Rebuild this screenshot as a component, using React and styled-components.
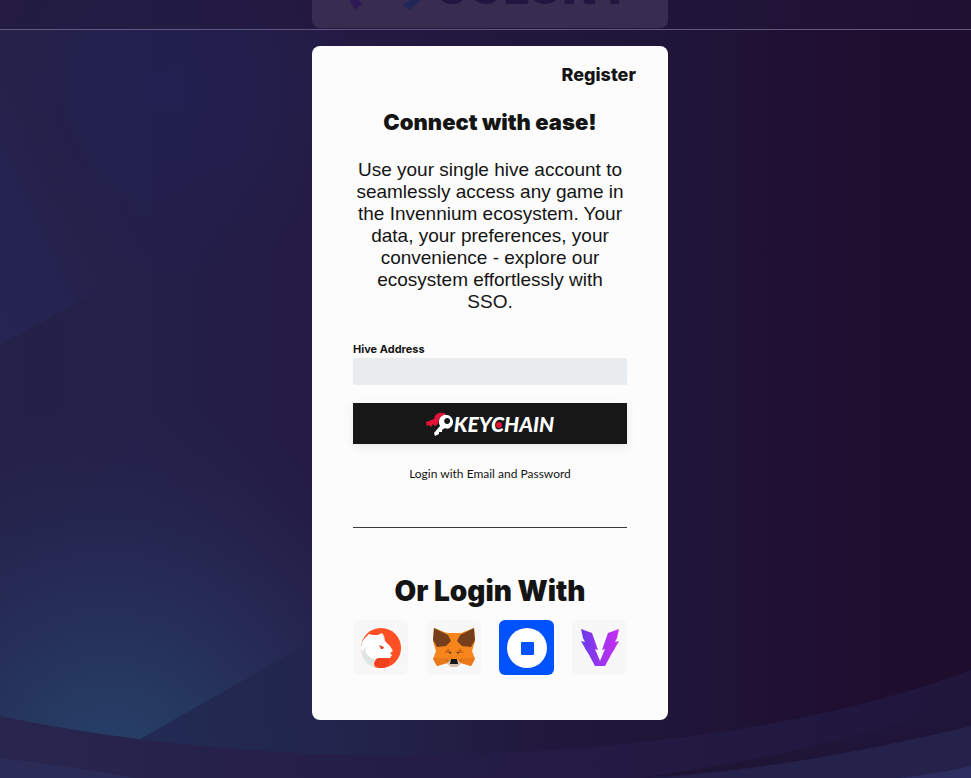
import React from 'react'
import styled, { createGlobalStyle } from 'styled-components'

const GlobalStyle = createGlobalStyle`
  * {
    box-sizing: border-box;
  }
  body {
    margin: 0;
    background: #221a42;
    color: #141414;
    font-family: 'Inter', 'Liberation Sans', sans-serif;
  }
`

const Backdrop = () => (
  <BackdropArt viewBox="0 0 971 778" preserveAspectRatio="none" aria-hidden="true">
    <defs>
      <linearGradient id="night" x1="0" x2="1" y1="0" y2="0">
        <stop offset="0" stopColor="#242148" />
        <stop offset="0.15" stopColor="#23204a" />
        <stop offset="0.32" stopColor="#241b44" />
        <stop offset="0.7" stopColor="#1f1538" />
        <stop offset="0.8" stopColor="#1f1134" />
        <stop offset="0.87" stopColor="#200e31" />
        <stop offset="1" stopColor="#1f0d2d" />
      </linearGradient>
      <linearGradient id="facet" gradientUnits="userSpaceOnUse" x1="0" x2="130" y1="300" y2="240">
        <stop offset="0" stopColor="#262453" />
        <stop offset="0.4" stopColor="#252350" />
        <stop offset="1" stopColor="#242148" stopOpacity="0" />
      </linearGradient>
      <radialGradient id="topGlow" gradientUnits="userSpaceOnUse" cx="170" cy="90" r="190">
        <stop offset="0" stopColor="#222050" />
        <stop offset="1" stopColor="#222050" stopOpacity="0" />
      </radialGradient>
      <radialGradient id="glow" gradientUnits="userSpaceOnUse" cx="110" cy="770" r="370">
        <stop offset="0" stopColor="#26426a" />
        <stop offset="0.25" stopColor="#26385f" />
        <stop offset="0.6" stopColor="#262b56" stopOpacity="0.75" />
        <stop offset="1" stopColor="#25234b" stopOpacity="0" />
      </radialGradient>
      <linearGradient id="lowSlope" gradientUnits="userSpaceOnUse" x1="140" x2="620" y1="750" y2="700">
        <stop offset="0" stopColor="#222b54" />
        <stop offset="0.4" stopColor="#22254d" />
        <stop offset="1" stopColor="#20173a" stopOpacity="0" />
      </linearGradient>
      <linearGradient id="rim" x1="0" x2="1" y1="0" y2="0">
        <stop offset="0" stopColor="#28264f" />
        <stop offset="0.35" stopColor="#251e48" />
        <stop offset="1" stopColor="#20163c" />
      </linearGradient>
      <linearGradient id="rimShade" x1="0" x2="0" y1="0" y2="1">
        <stop offset="0" stopColor="#1d1230" stopOpacity="0" />
        <stop offset="1" stopColor="#1d1230" stopOpacity="0.8" />
      </linearGradient>
    </defs>
    <rect width="971" height="778" fill="url(#night)" />
    <rect width="370" height="300" fill="url(#topGlow)" />
    <path d="M0 29H160V257L0 345Z" fill="url(#facet)" />
    <rect width="490" height="378" y="400" fill="url(#glow)" />
    <path d="M140 739L312 641L620 465V778H140Z" fill="url(#lowSlope)" />
    <path d="M0 716C160 749 300 755 400 755C620 755 830 724 971 670V778H0Z" fill="url(#rim)" />
    <path d="M640 778C770 769 870 750 971 726V700C870 735 770 760 640 778Z" fill="url(#rimShade)" />
    <path d="M660 778C770 769 870 750 971 726V778Z" fill="#24224a" />
    <path d="M0 758C60 765 100 772 138 778H0Z" fill="#2a2b57" />
    <path d="M900 778C925 775 950 771 971 766V778Z" fill="#2b2e5f" />
  </BackdropArt>
)

const KeyIcon = () => (
  <svg width="28" height="24" viewBox="0 0 28 24" aria-hidden="true">
    <path
      d="M20 2C17 0 11 0 9 4L8 7L0 10L1 14L3 13L5 15L7 12L9 14L12 12L13 7L16 4Z"
      fill="#e31337"
    />
    <path
      fillRule="evenodd"
      d="M16 4C20 1 27 4 27 10C27 15 22 18 19 16L16 18L16 20L13 20L13 22L9 24L8 21L14 14C12 10 13 6 16 4ZM21 6A3 3 0 1 0 24 10A3 3 0 0 0 21 6Z"
      fill="#ffffff"
    />
  </svg>
)

const BearIcon = () => (
  <svg width="40" height="40" viewBox="0 0 40 40" aria-hidden="true">
    <circle cx="20" cy="20" r="20" fill="#ff4f24" />
    <path
      d="M6 8L8 6L12 7L17 7L21 5L23 8L24 13L29 18L32 23L29 25L31 27L29 30L17 30C13 32 12 36 14 39C6 37 0 29 0 20C0 15 2 11 6 8Z"
      fill="#ffffff"
    />
    <path d="M5 18C3 24 7 30 14 31C12 34 12 37 14 39C6 37 1 31 1 24Z" fill="#dfe4e5" />
    <path d="M16 31C20 29 22 31 28 31L28 36C25 39 23 40 20 40C14 40 12 35 16 31Z" fill="#f0401f" />
    <path d="M18 17L23 19L22 21H20Z" fill="#ef3e22" />
  </svg>
)

const FoxIcon = () => (
  <svg width="42" height="40" viewBox="0 0 42 40" aria-hidden="true">
    <path d="M1 0L14 5H28L41 0L42 13L39 23L42 31L38 38L28 35L24 39H18L14 35L4 38L0 31L3 23L0 13Z" fill="#f6851b" />
    <path d="M1 0L15 7L18 13L13 18L4 19L0 12ZM41 0L27 7L24 13L29 18L38 19L42 12Z" fill="#763e1a" />
    <path d="M0 30H12L14 35L4 38ZM42 30H30L28 35L38 38Z" fill="#e9791b" />
    <path d="M11 25L15 20L19 25ZM31 25L27 20L23 25Z" fill="#d96a16" />
    <path d="M15 24L18 24V26ZM27 24L24 24V26Z" fill="#4d3a2b" />
    <path d="M12 30L18 33L14 35ZM30 30L24 33L28 35Z" fill="#d96a16" />
    <path d="M14 35L18 31H24L28 35L24 39H18Z" fill="#d7c1b3" />
    <path d="M18 31H24L25 36H17Z" fill="#161616" />
  </svg>
)

const CoinIcon = () => (
  <svg width="40" height="40" viewBox="0 0 40 40" aria-hidden="true">
    <circle cx="20" cy="20" r="20" fill="#ffffff" />
    <rect x="14" y="14" width="13" height="13" rx="1" fill="#0052ff" />
  </svg>
)

const WingIcon = () => (
  <svg width="38" height="38" viewBox="0 0 38 38" aria-hidden="true">
    <defs>
      <linearGradient id="wing" x1="0" x2="1" y1="0" y2="0">
        <stop offset="0" stopColor="#693bea" />
        <stop offset="1" stopColor="#c92df0" />
      </linearGradient>
    </defs>
    <path
      d="M0 0L11 4L17 21L14 20L19 32L24 20L21 21L27 4L38 0L36 9L34 13L38 12L33 21L31 24L24 37H14L7 24L5 21L0 12L4 13L2 9Z"
      fill="url(#wing)"
    />
  </svg>
)

const wallets = [
  { name: 'Bear wallet', icon: <BearIcon /> },
  { name: 'Fox wallet', icon: <FoxIcon /> },
  { name: 'Coin wallet', icon: <CoinIcon />, color: '#0052ff' },
  { name: 'Wing wallet', icon: <WingIcon /> }
]

const App = () => {
  const [address, setAddress] = React.useState('')

  return (
    <Page>
      <GlobalStyle />
      <Backdrop />
      <Header>
        <Brand>
          <svg width="84" height="28" viewBox="0 0 84 28" aria-hidden="true">
            <path d="M0 -4L9 -4L16 4L7 9Z" fill="#2d1b58" />
            <path d="M82 -4L73 -4L59 4L68 9Z" fill="#1f2858" />
          </svg>
          <BrandName>COLONY</BrandName>
        </Brand>
      </Header>
      <Main>
        <Card>
          <TopLink href="#register">Register</TopLink>
          <Title>Connect with ease!</Title>
          <Intro>
            Use your single hive account to seamlessly access any game in the Invennium ecosystem. Your data, your
            preferences, your convenience - explore our ecosystem effortlessly with SSO.
          </Intro>
          <Label htmlFor="hive">Hive Address</Label>
          <Input id="hive" value={address} onChange={e => setAddress(e.target.value)} />
          <KeychainButton type="button">
            <KeyIcon />
            <span>
              KEY<DottedLetter>C</DottedLetter>HAIN
            </span>
          </KeychainButton>
          <EmailLink href="#email">Login with Email and Password</EmailLink>
          <Divider />
          <Subtitle>Or Login With</Subtitle>
          <Wallets>
            {wallets.map(({ name, icon, color }) => (
              <WalletButton key={name} type="button" aria-label={name} $color={color}>
                {icon}
              </WalletButton>
            ))}
          </Wallets>
        </Card>
      </Main>
    </Page>
  )
}

const Page = styled('div')`
  position: relative;
  min-height: 100vh;
  overflow: hidden;
`

const BackdropArt = styled('svg')`
  position: absolute;
  inset: 0;
  width: 100%;
  height: 100%;
`

const Header = styled('header')`
  position: relative;
  display: flex;
  justify-content: center;
  height: 30px;
  padding-left: 9px;
  background: rgba(33, 22, 58, 0.5);
  border-bottom: 1px solid #62567c;
`

const Brand = styled('div')`
  display: flex;
  align-items: flex-end;
  width: 100%;
  max-width: 356px;
  height: 28px;
  padding: 0 36px;
  overflow: hidden;
  background: #382d50;
  border-radius: 0 0 8px 8px;
`

const BrandName = styled('span')`
  margin-left: 10px;
  padding-bottom: 16px;
  color: #221641;
  font-size: 45px;
  font-weight: 900;
  line-height: 48px;
`

const Main = styled('main')`
  position: relative;
  display: flex;
  justify-content: center;
  padding: 16px 0 58px 9px;
`

const Card = styled('section')`
  display: flex;
  flex-direction: column;
  width: 100%;
  max-width: 356px;
  padding: 16px 41px 45px;
  background: #fcfcfc;
  border-radius: 8px;
`

const TopLink = styled('a')`
  align-self: flex-end;
  margin-right: -9px;
  color: inherit;
  font-size: 18px;
  font-weight: 800;
  line-height: 26px;
  text-decoration: none;
`

const Title = styled('h1')`
  margin: 18px 0 0;
  font-size: 22px;
  font-weight: 900;
  line-height: 32px;
  text-align: center;
`

const Intro = styled('p')`
  margin: 21px 0 0;
  font-family: 'Liberation Sans', sans-serif;
  font-size: 19px;
  line-height: 22px;
  text-align: center;
`

const Label = styled('label')`
  margin-top: 28px;
  font-size: 11px;
  font-weight: 700;
  line-height: 16px;
`

const Input = styled('input')`
  width: 100%;
  height: 27px;
  margin-top: 1px;
  padding: 0 8px;
  background: #e8ecef;
  border: 0;
  border-radius: 2px;
  font: inherit;
  font-size: 14px;
`

const KeychainButton = styled('button')`
  display: flex;
  align-items: center;
  justify-content: center;
  height: 41px;
  margin-top: 18px;
  padding: 0;
  background: #171717;
  border: 0;
  box-shadow: 0 3px 10px rgba(0, 0, 0, 0.08);
  color: #ffffff;
  cursor: pointer;
  font-family: 'Lato', sans-serif;
  font-size: 21px;
  font-style: italic;
  font-weight: 900;
`

const DottedLetter = styled('span')`
  position: relative;

  &::after {
    content: '';
    position: absolute;
    top: 50%;
    left: 50%;
    width: 6px;
    height: 6px;
    margin: -2px 0 0 -2px;
    background: #e31337;
    border-radius: 50%;
  }
`

const EmailLink = styled('a')`
  margin-top: 22px;
  color: inherit;
  font-family: 'Lato', 'Liberation Sans', sans-serif;
  font-size: 12px;
  line-height: 16px;
  text-align: center;
  text-decoration: none;
`

const Divider = styled('hr')`
  width: 100%;
  height: 1px;
  margin: 45px 0 0;
  background: #3a3a3a;
  border: 0;
`

const Subtitle = styled('h2')`
  margin: 44px 0 0;
  font-size: 28px;
  font-weight: 900;
  line-height: 38px;
  text-align: center;
`

const Wallets = styled('div')`
  display: flex;
  justify-content: space-between;
  margin-top: 10px;
`

const WalletButton = styled('button')`
  display: flex;
  align-items: center;
  justify-content: center;
  width: 55px;
  height: 55px;
  padding: 0;
  background: ${props => props.$color || '#f7f7f7'};
  border: 0;
  border-radius: 6px;
  cursor: pointer;
`

export default App
